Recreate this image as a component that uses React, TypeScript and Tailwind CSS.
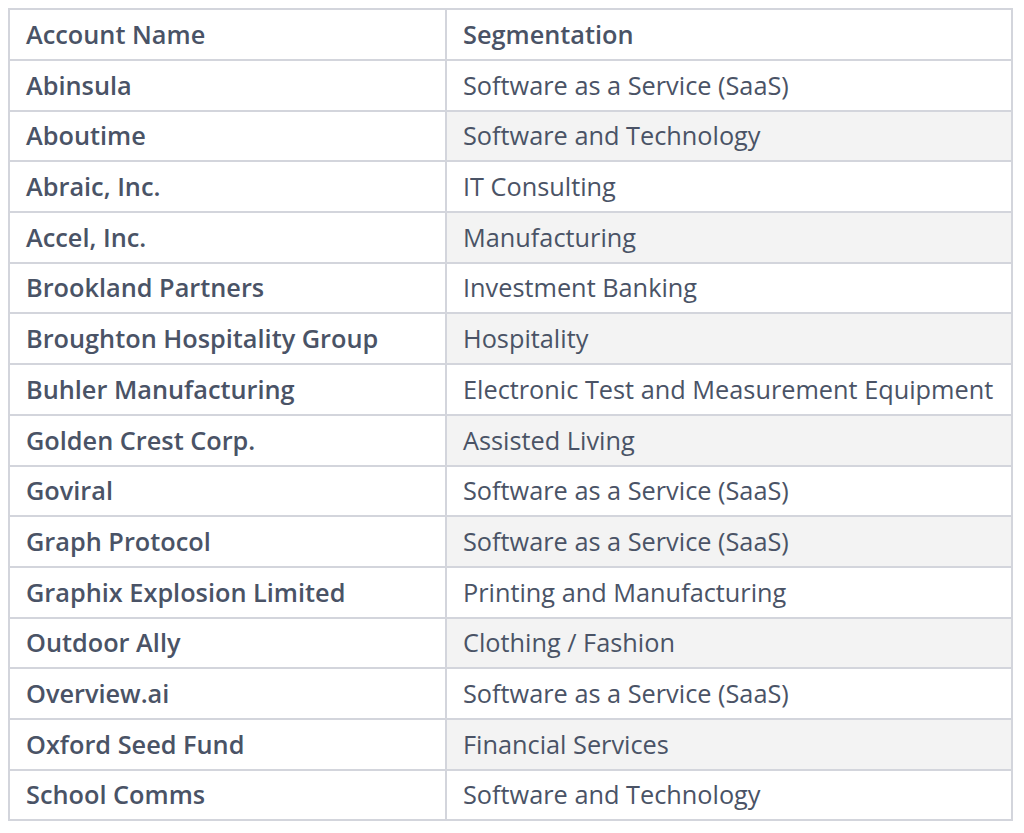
import React from "react";

const rows: [string, string][] = [
  ["Abinsula", "Software as a Service (SaaS)"],
  ["Aboutime", "Software and Technology"],
  ["Abraic, Inc.", "IT Consulting"],
  ["Accel, Inc.", "Manufacturing"],
  ["Brookland Partners", "Investment Banking"],
  ["Broughton Hospitality Group", "Hospitality"],
  ["Buhler Manufacturing", "Electronic Test and Measurement Equipment"],
  ["Golden Crest Corp.", "Assisted Living"],
  ["Goviral", "Software as a Service (SaaS)"],
  ["Graph Protocol", "Software as a Service (SaaS)"],
  ["Graphix Explosion Limited", "Printing and Manufacturing"],
  ["Outdoor Ally", "Clothing / Fashion"],
  ["Overview.ai", "Software as a Service (SaaS)"],
  ["Oxford Seed Fund", "Financial Services"],
  ["School Comms", "Software and Technology"],
];

export default function App() {
  return (
    <div
      className="w-[1024px] h-[833px] bg-white pt-[8px] pl-[8px] text-[#4a5366]"
      style={{ fontFamily: '"Open Sans", sans-serif' }}
    >
      <table className="w-[1005px] border-collapse text-[25.3px] leading-none">
        <thead>
          <tr className="h-[51px]">
            <th className="w-[437px] border-2 border-[#d3d5dc] pl-[16px] text-left font-semibold">
              Account Name
            </th>
            <th className="border-2 border-[#d3d5dc] pl-[16px] text-left font-semibold">
              Segmentation
            </th>
          </tr>
        </thead>
        <tbody>
          {rows.map(([name, seg], i) => (
            <tr key={name} className="h-[50.7px]">
              <td className="border-2 border-[#d3d5dc] pl-[16px] font-semibold">{name}</td>
              <td
                className={
                  "border-2 border-[#d3d5dc] pl-[16px] font-normal " +
                  (i % 2 === 1 ? "bg-[#f3f3f3]" : "bg-white")
                }
              >
                {seg}
              </td>
            </tr>
          ))}
        </tbody>
      </table>
    </div>
  );
}
